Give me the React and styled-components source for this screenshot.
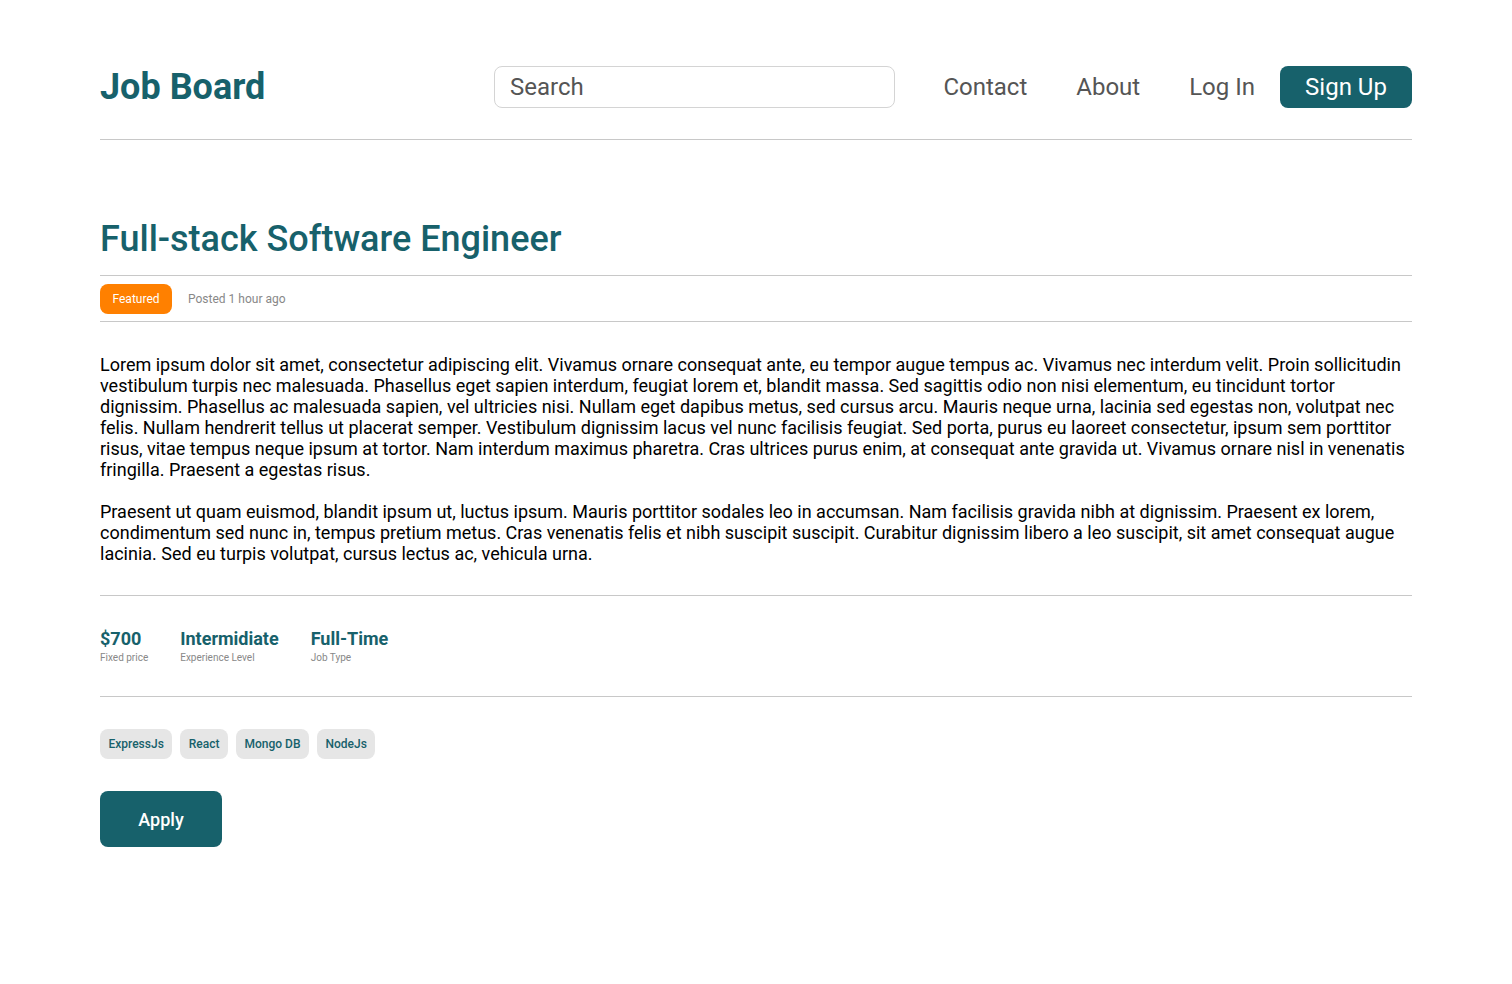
import React from 'react';
import styled, { createGlobalStyle } from 'styled-components';

const teal = '#17616b';

const GlobalStyle = createGlobalStyle`
  body {
    margin: 0;
    background: #fff;
    font-family: Roboto, "Liberation Sans", sans-serif;
    color: #000;
  }
`;

const skills = ['ExpressJs', 'React', 'Mongo DB', 'NodeJs'];

const stats = [
  { value: '$700', label: 'Fixed price' },
  { value: 'Intermidiate', label: 'Experience Level' },
  { value: 'Full-Time', label: 'Job Type' },
];

const App = () => (
  <Page>
    <GlobalStyle />
    <Header>
      <Logo>Job Board</Logo>
      <SearchInput placeholder="Search" />
      <Nav>
        <NavLink href="#">Contact</NavLink>
        <NavLink href="#">About</NavLink>
        <NavLink href="#">Log In</NavLink>
        <SignUp>Sign Up</SignUp>
      </Nav>
    </Header>

    <Title>Full-stack Software Engineer</Title>
    <MetaRow>
      <Badge>Featured</Badge>
      <Posted>Posted 1 hour ago</Posted>
    </MetaRow>

    <Description>
      <p>
        Lorem ipsum dolor sit amet, consectetur adipiscing elit. Vivamus ornare consequat ante, eu tempor augue
        tempus ac. Vivamus nec interdum velit. Proin sollicitudin vestibulum turpis nec malesuada. Phasellus eget
        sapien interdum, feugiat lorem et, blandit massa. Sed sagittis odio non nisi elementum, eu tincidunt tortor
        dignissim. Phasellus ac malesuada sapien, vel ultricies nisi. Nullam eget dapibus metus, sed cursus arcu.
        Mauris neque urna, lacinia sed egestas non, volutpat nec felis. Nullam hendrerit tellus ut placerat semper.
        Vestibulum dignissim lacus vel nunc facilisis feugiat. Sed porta, purus eu laoreet consectetur, ipsum sem
        porttitor risus, vitae tempus neque ipsum at tortor. Nam interdum maximus pharetra. Cras ultrices purus enim,
        at consequat ante gravida ut. Vivamus ornare nisl in venenatis fringilla. Praesent a egestas risus.
      </p>
      <p>
        Praesent ut quam euismod, blandit ipsum ut, luctus ipsum. Mauris porttitor sodales leo in accumsan. Nam
        facilisis gravida nibh at dignissim. Praesent ex lorem, condimentum sed nunc in, tempus pretium metus. Cras
        venenatis felis et nibh suscipit suscipit. Curabitur dignissim libero a leo suscipit, sit amet consequat
        augue lacinia. Sed eu turpis volutpat, cursus lectus ac, vehicula urna.
      </p>
    </Description>

    <Stats>
      {stats.map(stat => (
        <Stat key={stat.label}>
          <StatValue>{stat.value}</StatValue>
          <StatLabel>{stat.label}</StatLabel>
        </Stat>
      ))}
    </Stats>

    <Tags>
      {skills.map(skill => (
        <Tag key={skill}>{skill}</Tag>
      ))}
    </Tags>

    <ApplyButton>Apply</ApplyButton>
  </Page>
);
export default App;

const Page = styled.div`
  padding: 0 100px 60px;
`;

const Header = styled.header`
  display: flex;
  align-items: center;
  padding: 66px 0 31px;
  border-bottom: 1px solid #c8c8c8;
`;

const Logo = styled.h1`
  margin: 0;
  width: 394px;
  font-size: 36px;
  font-weight: 700;
  color: ${teal};
  line-height: 42px;
`;

const SearchInput = styled.input`
  box-sizing: border-box;
  width: 401px;
  height: 42px;
  padding: 0 15px;
  border: 1px solid #d4d4d4;
  border-radius: 8px;
  font-family: Roboto, "Liberation Sans", sans-serif;
  font-size: 24px;
  color: #555;
  outline: none;

  &::placeholder {
    color: #555;
  }
`;

const Nav = styled.nav`
  display: flex;
  align-items: center;
  margin-left: auto;
`;

const NavLink = styled.a`
  margin-right: 49px;
  font-size: 24px;
  color: #555;
  text-decoration: none;

  &:nth-child(3) {
    margin-right: 25px;
  }
`;

const SignUp = styled.button`
  width: 132px;
  height: 42px;
  border: none;
  border-radius: 8px;
  background: ${teal};
  color: #fff;
  font-family: Roboto, "Liberation Sans", sans-serif;
  font-size: 24px;
  cursor: pointer;
`;

const Title = styled.h2`
  margin: 78px 0 0;
  padding-bottom: 15px;
  font-size: 36px;
  font-weight: 500;
  line-height: 42px;
  color: ${teal};
  border-bottom: 1px solid #c8c8c8;
`;

const MetaRow = styled.div`
  display: flex;
  align-items: center;
  gap: 16px;
  padding: 8px 0 7px;
  border-bottom: 1px solid #c8c8c8;
`;

const Badge = styled.span`
  display: inline-flex;
  align-items: center;
  height: 30px;
  padding: 0 12.5px;
  border-radius: 8px;
  background: #ff8000;
  color: #fff;
  font-size: 12px;
`;

const Posted = styled.span`
  font-size: 12px;
  color: #888;
`;

const Description = styled.div`
  padding: 32px 0 31px;
  border-bottom: 1px solid #c8c8c8;

  p {
    margin: 0;
    font-size: 18px;
    line-height: 21px;
  }

  p + p {
    margin-top: 21px;
  }
`;

const Stats = styled.div`
  display: flex;
  gap: 32px;
  padding: 32px 0;
  border-bottom: 1px solid #c8c8c8;
`;

const Stat = styled.div`
  display: flex;
  flex-direction: column;
  gap: 3px;
`;

const StatValue = styled.span`
  font-size: 18px;
  font-weight: 700;
  line-height: 21px;
  color: ${teal};
`;

const StatLabel = styled.span`
  font-size: 10px;
  color: #888;
  line-height: 12px;
`;

const Tags = styled.div`
  display: flex;
  gap: 8px;
  padding-top: 32px;
`;

const Tag = styled.span`
  display: inline-flex;
  align-items: center;
  height: 30px;
  padding: 0 8.5px;
  border-radius: 8px;
  background: #e6e6e6;
  color: ${teal};
  font-size: 12px;
  font-weight: 500;
`;

const ApplyButton = styled.button`
  display: block;
  margin-top: 32px;
  width: 122px;
  height: 56px;
  border: none;
  border-radius: 8px;
  background: ${teal};
  color: #fff;
  font-family: Roboto, "Liberation Sans", sans-serif;
  font-size: 18px;
  font-weight: 500;
  cursor: pointer;
`;
